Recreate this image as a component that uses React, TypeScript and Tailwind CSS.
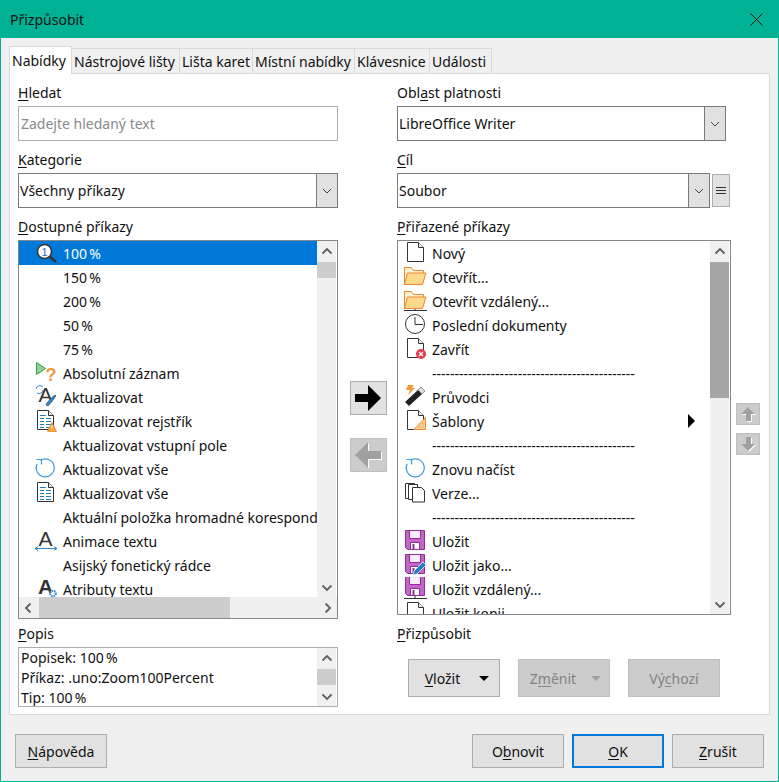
import type { ReactNode } from "react"

const ink = "#333"
const blue = "#2d8ad0"

function Doc({ children, lines }: { children?: ReactNode; lines?: boolean }) {
    return (
        <svg width="24" height="24" viewBox="0 0 24 24" fill="none">
            <path d="M4.5 1.5h11l5 5v14h-16z" fill="#fff" stroke={ink} />
            <path d="M15.5 1.5v5h5" fill="#eee" stroke={ink} />
            {lines && <path d="M7 6.500h6M7 9.500h4M13 9.500h5M7 12.500h4M13 12.500h5M7 15.500h4M13 15.500h5M7 18.500h4M13 18.500h5" stroke="#1b80c8" strokeWidth="1.200" />}
            {children}
        </svg>
    )
}

function Folder({ remote }: { remote?: boolean }) {
    return (
        <svg width="24" height="24" viewBox="0 0 24 24" fill="none">
            <path d="M1.500 20V2.500h7l2 3h10V8" fill="#fdf3d4" stroke="#ed8733" />
            <path d="M1.500 19.500l3-11.500h18.500l-3.500 11.500z" fill="#fbd98a" stroke="#ed8733" />
            {remote && <path d="M12 20v1M1 21.500h23" stroke={ink} />}
        </svg>
    )
}

function Save({ pencil, remote }: { pencil?: boolean; remote?: boolean }) {
    const y = remote ? -2 : 0
    return (
        <svg width="24" height="24" viewBox="0 0 24 24" fill="none">
            <g transform={`translate(0 ${y})`}>
                <path d="M2.500 1.500h19v19h-17l-2-2z" fill="#c266c8" stroke="#8e2e96" />
                <path d="M6.500 1.500h11v8h-11z" fill="#fbeafb" stroke="#8e2e96" />
                <path d="M7.500 13.500h9v7h-9z" fill="#fff" stroke="#8e2e96" />
                <path d="M10.500 15v5" stroke="#8e2e96" strokeWidth="2" />
            </g>
            {pencil && <path d="M10 22l1-4 9-9 3 3-9 9z" fill="#1b80c8" stroke="#fff" strokeWidth=".7" />}
            {remote && <path d="M12 19v2M1 21.500h23" stroke={ink} />}
        </svg>
    )
}

function Refresh() {
    return (
        <svg width="24" height="24" viewBox="0 0 24 24" fill="none">
            <path d="M7.500 3.200A9 9 0 1 1 4.200 6.800" stroke="#3a9ad9" strokeWidth="1.200" />
            <path d="M3.500 2.500h5v5" stroke="#3a9ad9" strokeWidth="1.200" />
        </svg>
    )
}

function GlyphA({ children, weight = 400 }: { children?: ReactNode; weight?: number }) {
    return (
        <svg width="24" height="24" viewBox="0 0 24 24" fill="none">
            <text x="12.500" y="17" textAnchor="middle" fontSize="21" fontWeight={weight} fontFamily="'Liberation Sans', sans-serif" fill={ink}>A</text>
            {children}
        </svg>
    )
}

const icons: Record<string, ReactNode> = {
    zoom: (
        <svg width="24" height="24" viewBox="0 0 24 24" fill="none">
            <path d="M16 15l7 6" stroke="#333" strokeWidth="2.500" />
            <circle cx="11.500" cy="10.500" r="7" fill="#fff" stroke="#333" strokeWidth="1.500" />
            <text x="11.500" y="14.500" textAnchor="middle" fontSize="11" fontFamily="'Liberation Sans', sans-serif" fill="#1b6fc0">1</text>
        </svg>
    ),
    record: (
        <svg width="24" height="24" viewBox="0 0 24 24" fill="none">
            <path d="M3.500 1.500l9 6-9 6z" fill="#8fd18f" stroke="#3b9a57" />
            <text x="18" y="20" textAnchor="middle" fontSize="18" fontWeight="700" fontFamily="'Liberation Sans', sans-serif" fill="#ee9a3a">?</text>
        </svg>
    ),
    update: (
        <GlyphA>
            <path d="M13 20c1-3 7-9 9-10l1 1-7 9c-1 1-2 1-3 0z" fill={blue} stroke="#333" strokeWidth=".6" />
            <path d="M3 4a4 4 0 0 1 7-2M10 5a4 4 0 0 1-6 3" stroke={blue} fill="none" />
        </GlyphA>
    ),
    index: (
        <Doc lines>
            <path d="M19 13.500l4.500 9h-9z" fill="#f7a43a" stroke="#c87a1e" strokeWidth=".6" />
            <path d="M19 16.500v3" stroke="#fff" />
        </Doc>
    ),
    refresh: <Refresh />,
    docLines: <Doc lines />,
    animate: (
        <GlyphA>
            <path d="M2 19.500h22M2 19.500l3-2M2 19.500l3 2M24 19.500l-3-2M24 19.500l-3 2" stroke={blue} />
        </GlyphA>
    ),
    attrs: (
        <GlyphA weight={700}>
            <circle cx="20" cy="16.500" r="2.800" fill="#fff" stroke={blue} strokeWidth="2" strokeDasharray="1.500 .8" />
        </GlyphA>
    ),
    doc: <Doc />,
    folder: <Folder />,
    folderRemote: <Folder remote />,
    clock: (
        <svg width="24" height="24" viewBox="0 0 24 24" fill="none">
            <circle cx="12" cy="11" r="9.500" fill="#fff" stroke={ink} />
            <path d="M12 4v7.500h8" stroke={ink} />
        </svg>
    ),
    close: (
        <Doc>
            <circle cx="18" cy="17" r="5" fill="#e33a4c" />
            <path d="M16 15l4 4M20 15l-4 4" stroke="#fff" strokeWidth="1.300" />
        </Doc>
    ),
    wizard: (
        <svg width="24" height="24" viewBox="0 0 24 24" fill="none">
            <path d="M2 17L15 5l4 4L6 21z" fill="#222" />
            <path d="M15 5l3-3 4 4-3 3z" fill="#ddd" stroke="#555" strokeWidth=".6" />
            <path d="M5 0h6L9 3h3L5 10l2-5H3z" fill="#f09a3a" />
        </svg>
    ),
    template: (
        <Doc>
            <path d="M22.500 8.500v12H11z" fill="#fbd98a" stroke="#ed8733" />
            <path d="M20 14v4h-4z" fill="#fff" stroke="#ed8733" strokeWidth=".7" />
        </Doc>
    ),
    versions: (
        <svg width="24" height="24" viewBox="0 0 24 24" fill="none">
            <path d="M2.500 2.500h9v15h-9z" fill="#fff" stroke={ink} />
            <path d="M5.500 3.500h9v15h-9z" fill="#fff" stroke={ink} />
            <path d="M9.500 6.500h9l3 3v11.500h-12z" fill="#fff" stroke={ink} />
        </svg>
    ),
    save: <Save />,
    saveAs: <Save pencil />,
    saveRemote: <Save remote />,
    saveCopy: (
        <Doc>
            <path d="M10.500 16.500h9v8h-9z" fill="#c266c8" stroke="#8e2e96" />
        </Doc>
    ),
}

function Chevron({ dir }: { dir: "up" | "down" | "left" | "right" }) {
    const paths = {
        up: "M1.500 7.500l4.500-4.500 4.500 4.500",
        down: "M1.500 4.500l4.500 4.500 4.500-4.500",
        left: "M7.500 1.500l-4.500 4.500 4.500 4.500",
        right: "M4.500 1.500l4.500 4.500-4.500 4.500",
    }
    return (
        <svg width="12" height="12" viewBox="0 0 12 12" fill="none">
            <path d={paths[dir]} stroke="#606060" strokeWidth="1.800" />
        </svg>
    )
}

function Label({ pre = "", hot, post, className = "" }: { pre?: string; hot: string; post: string; className?: string }) {
    return (
        <div className={"h-[20px] leading-[20px] " + className}>
            {pre}
            <u className="underline-offset-2">{hot}</u>
            {post}
        </div>
    )
}

function Select({ text, className = "" }: { text: string; className?: string }) {
    return (
        <div className={"flex h-[35px] border border-[#7a7a7a] bg-white " + className}>
            <div className="flex-1 pl-[1px] leading-[33px]">{text}</div>
            <div className="flex w-[21px] items-center justify-center border-l border-[#7a7a7a] bg-[#e1e1e1]">
                <svg width="10" height="6" viewBox="0 0 10 6" fill="none">
                    <path d="M1 1l4 4 4-4" stroke="#444" />
                </svg>
            </div>
        </div>
    )
}

function VScroll({ thumb, top = "h-[16px]" }: { thumb: string; top?: string }) {
    return (
        <div className="flex w-[20px] flex-col border-r border-white bg-[#f0f0f0]">
            <div className="flex h-[21px] shrink-0 items-center justify-center">
                <Chevron dir="up" />
            </div>
            <div className={"shrink-0 " + top + " " + thumb} />
            <div className="flex-1" />
            <div className="flex h-[21px] shrink-0 items-center justify-center">
                <Chevron dir="down" />
            </div>
        </div>
    )
}

function Row({ icon, text, selected, left, arrow }: { icon?: string; text: string; selected?: boolean; left?: boolean; arrow?: boolean }) {
    return (
        <div className={"flex h-[24px] shrink-0 items-center whitespace-nowrap " + (left ? "pl-[14px] gap-[6px] " : "pl-[5px] gap-[5px] ") + (selected ? "bg-[#0078d7] text-white" : "")}>
            <div className="h-[24px] w-[24px] shrink-0">{icon && icons[icon]}</div>
            <span className="flex-1">{text}</span>
            {arrow && (
                <svg width="8" height="14" viewBox="0 0 8 14" className="mr-[14px]">
                    <path d="M0 0l7 7-7 7z" fill="#000" />
                </svg>
            )}
        </div>
    )
}

function Btn({ children, disabled, focused, className = "" }: { children: ReactNode; disabled?: boolean; focused?: boolean; className?: string }) {
    return (
        <div
            className={
                "flex w-[92px] items-center justify-center " +
                (focused ? "border-2 border-[#0078d7] bg-[#e1e1e1] " : disabled ? "border border-[#bfbfbf] bg-[#cccccc] text-[#838383] " : "border border-[#adadad] bg-[#e1e1e1] ") +
                className
            }
        >
            {children}
        </div>
    )
}

function ArrowBtn({ dir, disabled, className = "" }: { dir: "left" | "right" | "up" | "down"; disabled?: boolean; className?: string }) {
    const d = {
        right: "M1 9h13V0l13 13-13 13v-9H1z",
        left: "M27 9H14V0L1 13l13 13v-9h13z",
        up: "M8 1l7 7h-4v7H6V8H1z",
        down: "M6 1h5v7h4l-7 7-7-7h5z",
    }
    const big = dir === "left" || dir === "right"
    return (
        <div className={"flex items-center justify-center border " + (disabled ? "border-[#bfbfbf] bg-[#cccccc] " : "border-[#adadad] bg-[#e1e1e1] ") + className}>
            <svg width={big ? 28 : 17} height={big ? 26 : 17} viewBox={big ? "0 0 28 26" : "0 0 17 17"}>
                {disabled && <path d={d[dir]} fill="#fff" transform="translate(1 1)" />}
                <path d={d[dir]} fill={disabled ? "#a0a0a0" : "#000"} />
            </svg>
        </div>
    )
}

const tabs = [
    { name: "Nástrojové lišty", w: "w-[108px]" },
    { name: "Lišta karet", w: "w-[73px]" },
    { name: "Místní nabídky", w: "w-[102px]" },
    { name: "Klávesnice", w: "w-[75px]" },
    { name: "Události", w: "w-[62px]" },
]

const pct = "\u202f%"
const leftRows = [
    { icon: "zoom", text: "100" + pct, selected: true },
    { text: "150" + pct },
    { text: "200" + pct },
    { text: "50" + pct },
    { text: "75" + pct },
    { icon: "record", text: "Absolutní záznam" },
    { icon: "update", text: "Aktualizovat" },
    { icon: "index", text: "Aktualizovat rejstřík" },
    { text: "Aktualizovat vstupní pole" },
    { icon: "refresh", text: "Aktualizovat vše" },
    { icon: "docLines", text: "Aktualizovat vše" },
    { text: "Aktuální položka hromadné korespondence" },
    { icon: "animate", text: "Animace textu" },
    { text: "Asijský fonetický rádce" },
    { icon: "attrs", text: "Atributy textu" },
]

const sep = "---------------------------------------------"
const rightRows = [
    { icon: "doc", text: "Nový" },
    { icon: "folder", text: "Otevřít..." },
    { icon: "folderRemote", text: "Otevřít vzdálený..." },
    { icon: "clock", text: "Poslední dokumenty" },
    { icon: "close", text: "Zavřít" },
    { text: sep },
    { icon: "wizard", text: "Průvodci" },
    { icon: "template", text: "Šablony", arrow: true },
    { text: sep },
    { icon: "refresh", text: "Znovu načíst" },
    { icon: "versions", text: "Verze..." },
    { text: sep },
    { icon: "save", text: "Uložit" },
    { icon: "saveAs", text: "Uložit jako..." },
    { icon: "saveRemote", text: "Uložit vzdálený..." },
    { icon: "saveCopy", text: "Uložit kopii" },
]

export default function App() {
    return (
        <div className="flex h-[782px] w-[779px] flex-col border border-t-0 border-[#00b294] bg-[#f0f0f0] font-['Noto_Sans',sans-serif] text-[14px] text-[#111]">
            <div className="flex h-[38px] shrink-0 items-center justify-between bg-[#00b294] pl-[9px] pr-[15px]">
                <span>Přizpůsobit</span>
                <svg width="13" height="13" viewBox="0 0 13 13" fill="none">
                    <path d="M.5.500l12 12M12.500.500l-12 12" stroke="#111" />
                </svg>
            </div>

            <div className="flex h-[35px] items-end pl-[8px] pt-[8px]">
                <div className="z-10 -mb-[1px] flex h-[28px] w-[63px] items-center border border-b-0 border-[#d9d9d9] bg-white pl-[2px]">Nabídky</div>
                {tabs.map((t) => (
                    <div key={t.name} className={"flex h-[25px] items-center border border-b-0 border-l-0 border-[#d9d9d9] bg-[#f0f0f0] pl-[2px] " + t.w}>
                        {t.name}
                    </div>
                ))}
            </div>

            <div className="mx-[8px] flex h-[642px] border border-[#d9d9d9] bg-white pl-[8px] pt-[9px]">
                <div className="flex w-[320px] flex-col">
                    <Label hot="H" post="ledat" className="mb-[3px]" />
                    <div className="h-[35px] border border-[#adadad] pl-[2px] leading-[33px] text-[#8a8a8a]">Zadejte hledaný text</div>
                    <Label hot="K" post="ategorie" className="mb-[3px] mt-[9px]" />
                    <Select text="Všechny příkazy" />
                    <Label hot="D" post="ostupné příkazy" className="mb-[3px] mt-[9px]" />
                    <div className="flex h-[379px] flex-col border border-[#828790]">
                        <div className="flex h-[356px]">
                            <div className="flex-1 overflow-hidden">
                                {leftRows.map((r, i) => (
                                    <Row key={i} left {...r} />
                                ))}
                            </div>
                            <VScroll thumb="bg-[#cdcdcd]" />
                        </div>
                        <div className="flex flex-1 bg-[#f0f0f0]">
                            <div className="flex w-[20px] items-center justify-center">
                                <Chevron dir="left" />
                            </div>
                            <div className="w-[191px] bg-[#cdcdcd]" />
                            <div className="flex-1" />
                            <div className="flex w-[20px] items-center justify-center">
                                <Chevron dir="right" />
                            </div>
                        </div>
                    </div>
                    <Label hot="P" post="opis" className="mb-[3px] mt-[5px]" />
                    <div className="flex h-[60px] border border-[#adadad]">
                        <div className="flex-1 overflow-hidden pl-[2px] leading-[20px]">
                            <div>Popisek: 100{pct}</div>
                            <div>Příkaz: .uno:Zoom100Percent</div>
                            <div>Tip: 100{pct}</div>
                        </div>
                        <VScroll thumb="bg-[#cdcdcd]" />
                    </div>
                </div>

                <div className="flex w-[59px] flex-col items-center pl-[1px] pt-[298px]">
                    <ArrowBtn dir="right" className="h-[34px] w-[37px]" />
                    <ArrowBtn dir="left" disabled className="mt-[23px] h-[34px] w-[37px]" />
                </div>

                <div className="flex w-[334px] flex-col">
                    <Label pre="Obl" hot="a" post="st platnosti" className="mb-[3px]" />
                    <Select text="LibreOffice Writer" className="w-[329px]" />
                    <Label hot="C" post="íl" className="mb-[3px] mt-[9px]" />
                    <div className="flex gap-[2px]">
                        <Select text="Soubor" className="w-[313px]" />
                        <div className="mt-[1px] flex h-[33px] w-[18px] items-center justify-center border border-[#adadad] bg-[#e1e1e1]">
                            <svg width="10" height="8" viewBox="0 0 10 8">
                                <path d="M0 .500h10M0 3.500h10M0 6.500h10" stroke="#333" />
                            </svg>
                        </div>
                    </div>
                    <Label hot="P" post="řiřazené příkazy" className="mb-[3px] mt-[9px]" />
                    <div className="flex h-[375px] border border-[#828790]">
                        <div className="flex-1 overflow-hidden">
                            {rightRows.map((r, i) => (
                                <Row key={i} {...r} />
                            ))}
                        </div>
                        <VScroll thumb="bg-[#a6a6a6]" top="h-[136px]" />
                    </div>
                    <Label hot="P" post="řizpůsobit" className="mb-[15px] mt-[9px]" />
                    <div className="flex gap-[18px] pl-[11px]">
                        <Btn className="h-[38px] gap-[19px] pl-[6px]">
                            <span>
                                <u className="underline-offset-2">V</u>ložit
                            </span>
                            <svg width="10" height="5" viewBox="0 0 10 5">
                                <path d="M0 0h10L5 5z" fill="#000" />
                            </svg>
                        </Btn>
                        <Btn disabled className="h-[38px] gap-[15px] pl-[3px]">
                            <span>
                                Z<u className="underline-offset-2">m</u>ěnit
                            </span>
                            <svg width="10" height="5" viewBox="0 0 10 5">
                                <path d="M0 0h10L5 5z" fill="#a0a0a0" />
                            </svg>
                        </Btn>
                        <Btn disabled className="h-[38px]">
                            <span>
                                Vý<u className="underline-offset-2">c</u>hozí
                            </span>
                        </Btn>
                    </div>
                </div>

                <div className="ml-[5px] flex w-[24px] flex-col gap-[8px] pt-[320px]">
                    <ArrowBtn dir="up" disabled className="h-[22px] w-[24px]" />
                    <ArrowBtn dir="down" disabled className="h-[22px] w-[24px]" />
                </div>
            </div>

            <div className="mt-[19px] flex pl-[14px]">
                <Btn className="h-[34px]">
                    <span>
                        <u className="underline-offset-2">N</u>ápověda
                    </span>
                </Btn>
                <div className="ml-[365px] flex gap-[8px]">
                    <Btn className="h-[34px]">
                        <span>
                            O<u className="underline-offset-2">b</u>novit
                        </span>
                    </Btn>
                    <Btn focused className="h-[34px]">
                        <span>
                            <u className="underline-offset-2">O</u>K
                        </span>
                    </Btn>
                    <Btn className="h-[34px]">
                        <span>
                            <u className="underline-offset-2">Z</u>rušit
                        </span>
                    </Btn>
                </div>
            </div>
        </div>
    )
}
